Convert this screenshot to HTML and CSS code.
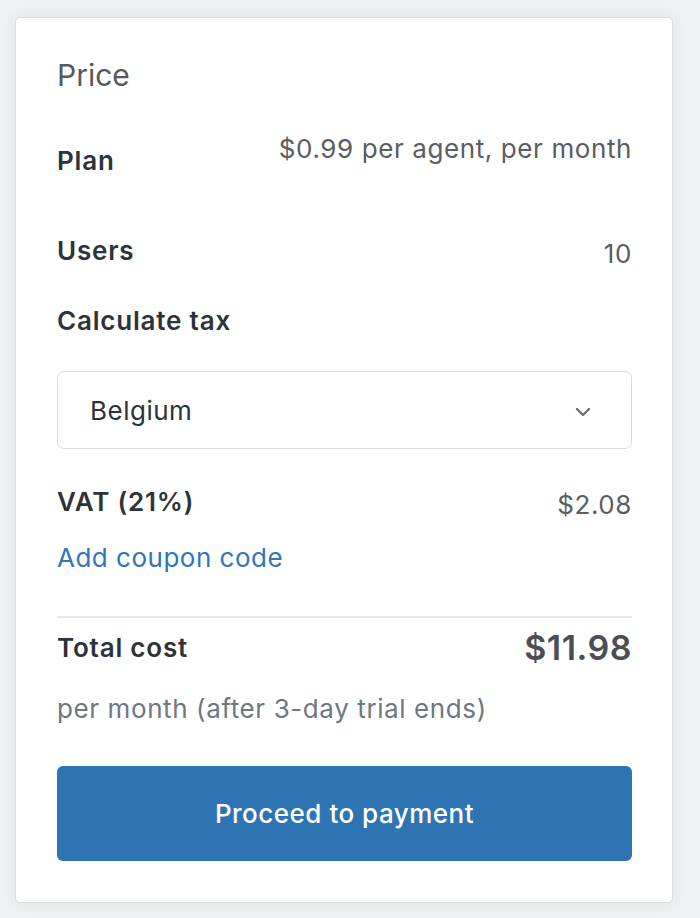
FILE: index.html
```html
<!DOCTYPE html>
<html>
<head>
<meta charset="utf-8">
<link rel="stylesheet" href="styles.css">
</head>
<body>
<div class="card">
  <h2 class="title">Price</h2>
  <div class="row row-plan">
    <span class="label label-plan">Plan</span>
    <span class="value">$0.99 per agent, per month</span>
  </div>
  <div class="row row-users">
    <span class="label">Users</span>
    <span class="value value-low">10</span>
  </div>
  <div class="label tax-label">Calculate tax</div>
  <div class="select">
    <span class="select-text">Belgium</span>
    <svg class="chevron" width="16" height="10" viewBox="0 0 16 10"><path d="M2 2 L8 8 L14 2" fill="none" stroke="#6b7178" stroke-width="2.4" stroke-linecap="round" stroke-linejoin="round"/></svg>
  </div>
  <div class="row row-vat">
    <span class="label">VAT (21%)</span>
    <span class="value value-low">$2.08</span>
  </div>
  <a class="coupon">Add coupon code</a>
  <div class="divider"></div>
  <div class="row row-total">
    <span class="label label-total">Total cost</span>
    <span class="total">$11.98</span>
  </div>
  <div class="note">per month (after 3-day trial ends)</div>
  <button class="pay">Proceed to payment</button>
</div>
</body>
</html>
```
FILE: styles.css
```css
html, body {
  margin: 0;
  padding: 0;
}
body {
  background: #eef0f2;
  font-family: "Inter", "Noto Sans", sans-serif;
  width: 700px;
  height: 918px;
  overflow: hidden;
  padding-top: 17px;
  padding-left: 15px;
  box-sizing: border-box;
}
.card {
  width: 658px;
  height: 886px;
  box-sizing: border-box;
  background: #fff;
  border: 1px solid #d9dce0;
  border-radius: 5px;
  box-shadow: 0 0 16px rgba(0, 0, 0, 0.05);
  padding: 39px 40px 0 41px;
  display: flex;
  flex-direction: column;
}
.title {
  margin: 0;
  font-size: 30px;
  line-height: 36px;
  font-weight: 400;
  color: #565a5e;
}
.row {
  display: flex;
  justify-content: space-between;
  align-items: flex-start;
}
.label {
  font-size: 26px;
  line-height: 32px;
  font-weight: 600;
  letter-spacing: 0.8px;
  color: #2d3338;
}
.value {
  font-size: 26px;
  line-height: 32px;
  letter-spacing: 0.6px;
  color: #5a5d61;
}
.row-plan {
  margin-top: 40px;
}
.label-plan {
  padding-top: 12px;
}
.row-users {
  margin-top: 58px;
}
.value-low {
  padding-top: 3px;
}
.tax-label {
  margin-top: 35px;
}
.select {
  margin-top: 34px;
  height: 78px;
  box-sizing: border-box;
  border: 1.5px solid #d6dade;
  border-radius: 7px;
  display: flex;
  align-items: center;
  justify-content: space-between;
  padding: 0 40px 0 32px;
}
.select-text {
  font-size: 26px;
  letter-spacing: 0.5px;
  color: #2d3338;
}
.chevron {
  display: block;
  margin-top: 3px;
}
.row-vat {
  margin-top: 37px;
}
.coupon {
  margin-top: 21px;
  font-size: 26px;
  line-height: 32px;
  letter-spacing: 0.5px;
  color: #2f76b8;
}
.divider {
  margin-top: 42px;
  height: 2px;
  background: #e8e8e8;
}
.row-total {
  margin-top: 10px;
  align-items: center;
}
.total {
  font-size: 34px;
  line-height: 40px;
  font-weight: 600;
  letter-spacing: 0.5px;
  color: #4b4e52;
}
.note {
  margin-top: 25px;
  font-size: 26px;
  line-height: 32px;
  letter-spacing: 0.6px;
  color: #6f777f;
}
.pay {
  margin-top: 41px;
  height: 95px;
  border: none;
  border-radius: 6px;
  background: #2e74b3;
  color: #fff;
  font-family: "Inter", "Noto Sans", sans-serif;
  font-size: 26px;
  font-weight: 500;
  letter-spacing: 0.5px;
  padding: 0;
}
```
